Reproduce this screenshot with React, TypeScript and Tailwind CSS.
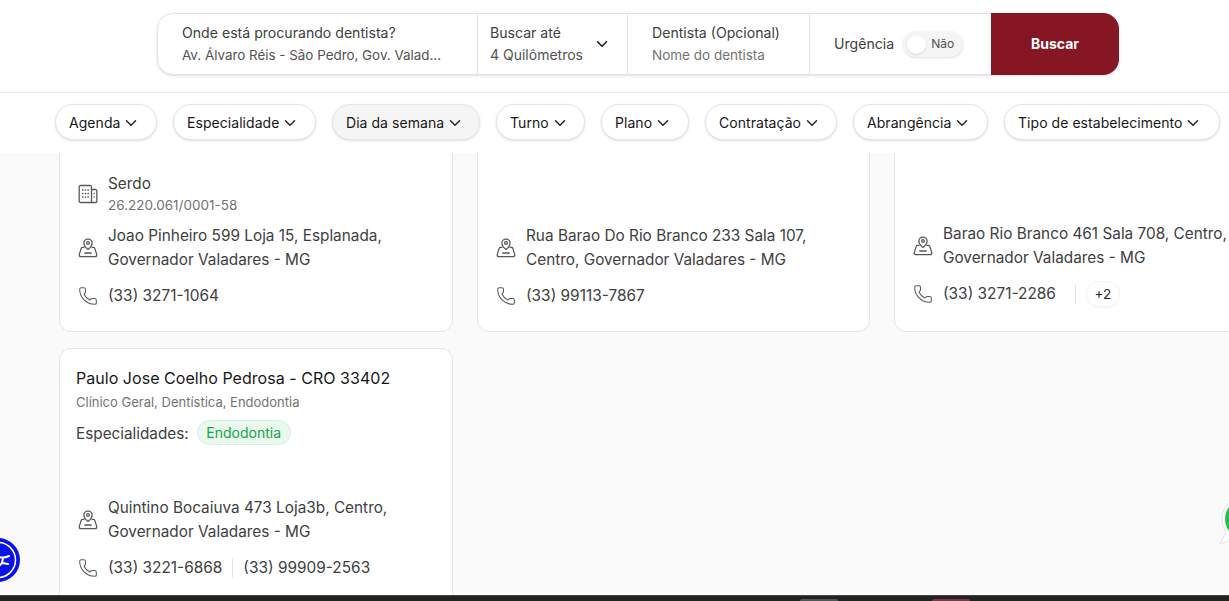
import { ChevronDown, Phone } from "lucide-react";

const filters = [
  { label: "Agenda", w: "w-[102px]" },
  { label: "Especialidade", w: "w-[143px]" },
  { label: "Dia da semana", w: "w-[148px]", active: true },
  { label: "Turno", w: "w-[89px]" },
  { label: "Plano", w: "w-[88px]" },
  { label: "Contratação", w: "w-[132px]" },
  { label: "Abrangência", w: "w-[135px]" },
  { label: "Tipo de estabelecimento", w: "w-[216px]" },
];

function PinIcon() {
  return (
    <svg width="20" height="20" viewBox="0 0 20 20" fill="none" stroke="#595959" strokeWidth="1.3" strokeLinecap="round" strokeLinejoin="round" className="shrink-0">
      <circle cx="10" cy="5" r="1.4" />
      <path d="M10 11.4C8.2 10 5.900 8 5.900 5.200a4.100 4.100 0 0 1 8.200 0C14.100 8 11.800 10 10 11.400Z" />
      <path d="M6 9.400H4.400c-.6 0-1 .4-1.200 1L1.300 16.400c-.4 1.200.4 2.300 1.700 2.300h14c1.300 0 2.100-1.100 1.700-2.300l-1.900-6c-.2-.6-.6-1-1.200-1H14" />
      <path d="M6.800 15h6.400" />
    </svg>
  );
}

function BuildingIcon() {
  return (
    <svg width="20" height="20" viewBox="0 0 20 20" fill="none" stroke="#595959" strokeWidth="1.3" strokeLinecap="round" strokeLinejoin="round" className="shrink-0">
      <path d="M13.500 18.500H2.500a1.300 1.300 0 0 1-1.300-1.300V2.800a1.300 1.300 0 0 1 1.300-1.300h9.700a1.300 1.300 0 0 1 1.300 1.300Z" />
      <path d="M13.500 5.500h4a1.300 1.300 0 0 1 1.300 1.300v10.400a1.300 1.300 0 0 1-1.300 1.300h-4" />
      <path d="M4.500 6h.5M7.200 6h.5M9.900 6h.5M4.500 9.500h.5M7.200 9.500h.5M9.900 9.500h.5M4.500 13h.5M7.200 13h.5M9.900 13h.5M16 9.500h.2M16 13h.2" />
    </svg>
  );
}

function Address({ line1, line2 }: { line1: string; line2: string }) {
  return (
    <div className="flex items-center gap-[10px]">
      <PinIcon />
      <p className="text-[15.35px] leading-[24px] text-[#404040] whitespace-nowrap">
        {line1}
        <br />
        {line2}
      </p>
    </div>
  );
}

function PhoneRow({ children }: { children: React.ReactNode }) {
  return (
    <div className="flex items-center gap-[10px] text-[15.4px] leading-[24px] text-[#404040]">
      <Phone size={20} strokeWidth={1.25} className="shrink-0 text-[#595959]" />
      {children}
    </div>
  );
}

export default function App() {
  return (
    <div className="h-[601px] overflow-hidden flex flex-col bg-[#fafafa] font-['Inter',sans-serif]">
      <header className="h-[93px] shrink-0 bg-white border-b border-[#e5e5e5] flex justify-center pt-[13px] pl-[47px]">
        <div className="w-[962px] h-[62px] flex rounded-2xl border border-[#e5e5e5] shadow-sm bg-white text-[14.1px] leading-[22px]">
          <div className="w-[320px] border-r border-[#e5e5e5] pl-[24px] flex flex-col justify-center text-[#404040]">
            <p>Onde está procurando dentista?</p>
            <p className="text-[#525252] text-[13.4px]">Av. Álvaro Réis - São Pedro, Gov. Valad...</p>
          </div>
          <div className="w-[150px] border-r border-[#e5e5e5] pl-[12px] pr-[16px] flex items-center justify-between text-[#404040]">
            <div>
              <p>Buscar até</p>
              <p className="text-[#525252] text-[14px]">4 Quilômetros</p>
            </div>
            <ChevronDown size={18} strokeWidth={2} className="text-[#171717]" />
          </div>
          <div className="w-[182px] border-r border-[#e5e5e5] pl-[24px] flex flex-col justify-center text-[#404040]">
            <p>Dentista (Opcional)</p>
            <p className="text-[#737373] text-[13.5px]">Nome do dentista</p>
          </div>
          <div className="w-[181px] pl-[24px] flex items-center gap-[9px] text-[#404040]">
            <span>Urgência</span>
            <div className="w-[60px] h-[26px] rounded-full bg-[#f5f5f5] shadow-sm flex items-center pl-[4px] gap-[5px]">
              <span className="w-[19px] h-[19px] rounded-full bg-white shadow-sm" />
              <span className="text-[12px] text-[#525252]">Não</span>
            </div>
          </div>
          <button className="flex-1 -my-px -mr-px rounded-r-2xl bg-[#871624] text-white text-[14px] font-bold">Buscar</button>
        </div>
      </header>

      <nav className="h-[60px] shrink-0 bg-white flex items-start gap-[16px] pt-[11px] pl-[55px]">
        {filters.map((f) => (
          <div
            key={f.label}
            className={`${f.w} h-[36px] shrink-0 rounded-full border border-[#e5e5e5] shadow-sm flex items-center justify-start gap-[2px] pl-[13px] pt-px text-[14px] tracking-[0.05px] text-[#171717] whitespace-nowrap ${f.active ? "bg-[#f5f5f5]" : "bg-white"}`}
          >
            {f.label}
            <ChevronDown size={18} strokeWidth={2} className="text-[#262626]" />
          </div>
        ))}
      </nav>

      <main className="flex-1 min-h-0 overflow-hidden pl-[59px]">
        <div className="w-[1228px] -mt-[20px] grid grid-cols-[394px_393px_393px] gap-x-[24px] gap-y-[16px]">
          <div className="h-[199px] bg-white border border-[#e5e5e5] rounded-xl flex flex-col justify-end pl-[18px] pb-[23px]">
            <div className="flex items-center gap-[10px] mb-[9px]">
              <BuildingIcon />
              <div>
                <p className="text-[15.35px] leading-[22px] text-[#404040]">Serdo</p>
                <p className="text-[13.5px] leading-[20px] text-[#737373]">26.220.061/0001-58</p>
              </div>
            </div>
            <div className="mb-[12px]">
              <Address line1="Joao Pinheiro 599 Loja 15, Esplanada," line2="Governador Valadares - MG" />
            </div>
            <PhoneRow>(33) 3271-1064</PhoneRow>
          </div>

          <div className="h-[199px] bg-white border border-[#e5e5e5] rounded-xl flex flex-col justify-end pl-[18px] pb-[23px]">
            <div className="mb-[12px]">
              <Address line1="Rua Barao Do Rio Branco 233 Sala 107," line2="Centro, Governador Valadares - MG" />
            </div>
            <PhoneRow>(33) 99113-7867</PhoneRow>
          </div>

          <div className="h-[199px] bg-white border border-[#e5e5e5] rounded-xl flex flex-col justify-end pl-[18px] pb-[24px]">
            <div className="mb-[11px]">
              <Address line1="Barao Rio Branco 461 Sala 708, Centro," line2="Governador Valadares - MG" />
            </div>
            <PhoneRow>
              (33) 3271-2286
              <span className="w-px h-[20px] bg-[#e5e5e5] ml-[9px]" />
              <span className="w-[34px] h-[26px] rounded-full border border-[#f5f5f5] shadow-xs flex items-center justify-center text-[13.5px] text-[#262626]">+2</span>
            </PhoneRow>
          </div>

          <div className="h-[260px] bg-white border border-[#e5e5e5] rounded-xl pl-[16px] pt-[18px] pr-[16px] flex flex-col">
            <h3 className="text-[16px] leading-[22px] font-normal tracking-[0.04px] text-[#171717]">Paulo Jose Coelho Pedrosa - CRO 33402</h3>
            <p className="text-[13px] leading-[20px] text-[#737373] mt-[3px]">Clínico Geral, Dentística, Endodontia</p>
            <div className="flex items-center gap-[8px] mt-[11px] text-[15.3px] leading-[22px] text-[#404040]">
              Especialidades:
              <span className="h-[25px] w-[94px] rounded-full bg-[#e9f9ee] border border-[#d3f2dd] text-[14px] text-[#16a34a] flex items-center justify-center -mt-[3px]">Endodontia</span>
            </div>
            <div className="pl-[2px] mt-[51px] mb-[12px]">
              <Address line1="Quintino Bocaiuva 473 Loja3b, Centro," line2="Governador Valadares - MG" />
            </div>
            <div className="pl-[2px]">
              <PhoneRow>
                (33) 3221-6868
                <span className="w-px h-[20px] bg-[#e5e5e5]" />
                (33) 99909-2563
              </PhoneRow>
            </div>
          </div>
        </div>
      </main>

      <footer className="h-[6px] shrink-0 z-10 bg-[#222220] border-t border-[#444] flex items-start pt-[3px] pl-[800px]">
        <span className="w-[38px] h-[2px] rounded-t bg-[#555]" />
        <span className="w-[38px] h-[2px] rounded-t bg-[#7a3a4a] ml-[94px]" />
      </footer>

      <div className="absolute left-[-24px] top-[538px] w-[44px] h-[44px] rounded-full bg-[#0a14e6] flex items-center justify-center">
        <svg width="38" height="38" viewBox="0 0 38 38" fill="none" stroke="white" strokeWidth="1.5" strokeLinecap="round">
          <circle cx="19" cy="19" r="17.5" />
          <path d="M17 15c5 2 9 2 13 0M24 17l-1 5 6 1M23 22l-6 6" strokeWidth="2" />
        </svg>
      </div>

      <svg className="absolute left-[1219px] top-[494px]" width="52" height="52" viewBox="0 0 52 52">
        <path d="M26 2C14 2 3 12 3 25c0 5 1.500 9 4 13L1 50l13-5c4 2 8 3 12 3 13 0 24-10 24-23S39 2 26 2Z" fill="white" stroke="#dfe3e8" />
        <circle cx="26" cy="25" r="20" fill="#25c04c" />
      </svg>
    </div>
  );
}
